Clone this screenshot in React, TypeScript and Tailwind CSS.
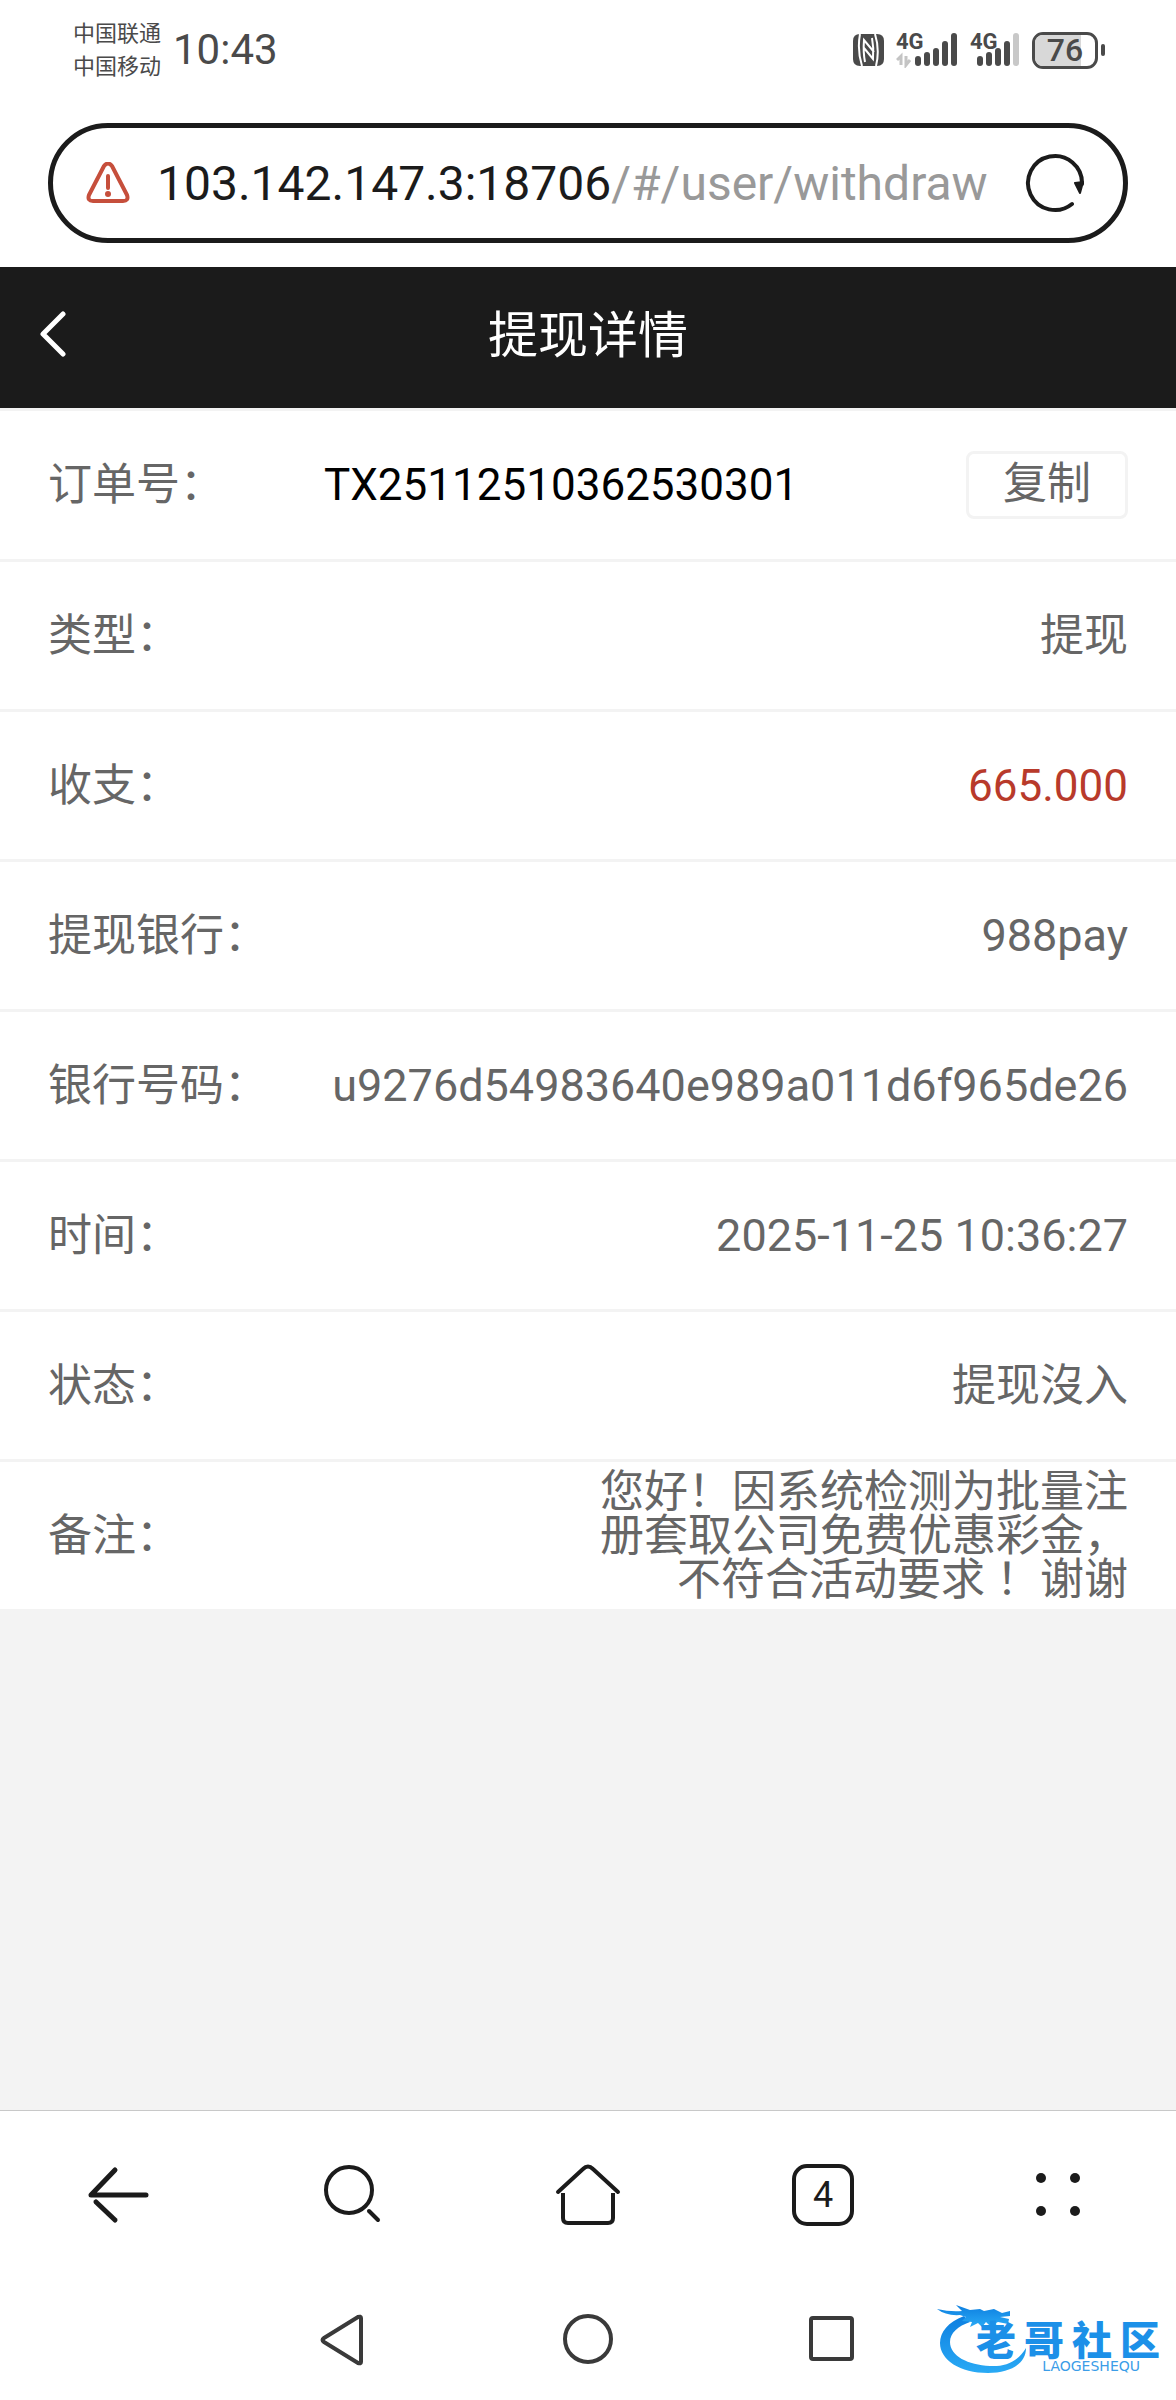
import type { ReactNode } from 'react'

type Detail = {
    label: string
    value: ReactNode
    valueClass?: string
}

const details: Detail[] = [
    { label: '类型：', value: '提现' },
    { label: '收支：', value: '665.000', valueClass: 'text-[#b83a2b]' },
    { label: '提现银行：', value: '988pay', valueClass: 'text-[45px]' },
    { label: '银行号码：', value: 'u9276d54983640e989a011d6f965de26', valueClass: 'text-[45px]' },
    { label: '时间：', value: '2025-11-25 10:36:27', valueClass: 'text-[45px]' },
    { label: '状态：', value: '提现沒入' },
    {
        label: '备注：',
        value: (
            <>
                您好！因系统检测为批量注册套取公司免费优惠彩金，不符合活动要求
                <span lang="zh-TW">！</span> 谢谢
            </>
        ),
        valueClass: 'w-[528px]',
    },
]

function NfcIcon() {
    return (
        <svg width="31" height="32" viewBox="0 0 31 32" aria-label="NFC">
            <path fill="#4a4a4a" d="M7 0H24Q31 0 31 7V25Q31 32 24 32H7Q0 32 0 25V7Q0 0 7 0Z" />
            <path fill="none" stroke="#fff" strokeWidth="2" d="M7 0Q4 16 9 32M22 0Q27 16 23 32" />
            <path fill="none" stroke="#fff" strokeWidth="2" d="M12 28Q10 18 11 6L21 18M11 14L20 25Q21 14 19 4" />
        </svg>
    )
}

function Signal({ roaming }: { roaming?: boolean }) {
    const tops = [24, 20, 16, 9, 1]
    const start = roaming ? 22 : 10
    return (
        <div className="relative">
            <svg width={start + 40} height="36" viewBox={`0 0 ${start + 40} 36`} aria-hidden="true">
                {tops.map((top, i) => (
                    <line
                        key={top}
                        x1={start + i * 9}
                        x2={start + i * 9}
                        y1={top + 3}
                        y2="31"
                        stroke={!roaming && i === 4 ? '#c8c8c8' : '#4a4a4a'}
                        strokeWidth="6"
                        strokeLinecap="round"
                    />
                ))}
                {roaming && (
                    <path d="M1 28L5 24V33M10 24V33L14 28" fill="none" stroke="#c4c4c4" strokeWidth="3" />
                )}
            </svg>
            <span className="absolute top-0 left-0 text-[22px] leading-5 font-bold">4G</span>
        </div>
    )
}

function Battery() {
    return (
        <div className="flex items-center gap-[3px]">
            <div className="relative flex h-[37px] w-[66px] items-center justify-center overflow-hidden rounded-[11px] border-[3px] border-[#4a4a4a]">
                <div className="absolute inset-y-0 left-0 w-[76%] bg-[#d8d8d8]" />
                <span className="relative text-[32px] leading-8 font-medium">76</span>
            </div>
            <div className="h-3 w-1 rounded-full bg-[#4a4a4a]" />
        </div>
    )
}

function StatusBar() {
    return (
        <div className="flex h-[100px] items-center justify-between pr-[71px] pl-[73px] text-[#4a4a4a]">
            <div className="flex items-center gap-3">
                <div className="text-[22px] leading-[33px]">
                    <p>中国联通</p>
                    <p>中国移动</p>
                </div>
                <span className="text-[42px] leading-[44px]">10:43</span>
            </div>
            <div className="flex items-center gap-3">
                <NfcIcon />
                <Signal roaming />
                <Signal />
                <Battery />
            </div>
        </div>
    )
}

function AddressBar() {
    return (
        <div className="px-12 pt-[23px] pb-6">
            <div className="flex h-[120px] items-center rounded-full border-[5px] border-[#1b1b1b] pr-[38px] pl-[33px]">
                <svg width="44" height="42" viewBox="0 0 44 42" fill="none" stroke="#c64f3c" strokeWidth="4" aria-label="不安全">
                    <path d="M18 4Q22 -1 26 4L41 33Q43 39 37 39H7Q1 39 3 33Z" strokeLinejoin="round" />
                    <path d="M22 14V26" strokeLinecap="round" />
                    <circle cx="22" cy="32" r="3" fill="#c64f3c" stroke="none" />
                </svg>
                <button className="flex-1 pt-[2px] pl-[27px] text-left text-[48px] leading-[56px] whitespace-nowrap text-[#1b1b1b]">
                    103.142.147.3:18706<span className="text-[#999]">/#/user/withdraw</span>
                </button>
                <button aria-label="刷新">
                    <svg width="60" height="60" viewBox="0 0 60 60" fill="none">
                        <path d="M57 31A27 27 0 1 0 47 51" stroke="#1b1b1b" strokeWidth="4" strokeLinecap="round" />
                        <path d="M50 30L58 29L55 40Z" fill="#1b1b1b" stroke="#1b1b1b" strokeWidth="2" strokeLinejoin="round" />
                    </svg>
                </button>
            </div>
        </div>
    )
}

function BrowserToolbar() {
    return (
        <nav className="grid h-[170px] grid-cols-5 place-items-center border-t border-[#c8c8c8] pb-[2px]">
            <button aria-label="后退">
                <svg width="62" height="62" viewBox="0 0 62 62" fill="none" stroke="#1b1b1b" strokeWidth="5" strokeLinecap="round">
                    <path d="M59 31H4L28 6" strokeLinejoin="round" />
                    <path d="M9 38L28 56" />
                </svg>
            </button>
            <button aria-label="搜索">
                <svg width="62" height="62" viewBox="0 0 62 62" fill="none" stroke="#1b1b1b" strokeWidth="4" strokeLinecap="round">
                    <circle cx="27" cy="26" r="23" />
                    <path d="M47 47L56 56" />
                </svg>
            </button>
            <button aria-label="主页">
                <svg width="66" height="62" viewBox="0 0 66 62" fill="none" stroke="#1b1b1b" strokeWidth="4">
                    <path d="M3 28L28 5Q33 0 38 5L63 28" strokeLinecap="round" />
                    <path d="M8 29V54Q8 59 13 59H53Q58 59 58 54V29" />
                </svg>
            </button>
            <button
                aria-label="标签页"
                className="flex h-[62px] w-[62px] items-center justify-center rounded-[15px] border-4 border-[#1b1b1b] text-[36px] leading-9 text-[#1b1b1b]"
            >
                4
            </button>
            <button aria-label="菜单">
                <svg width="46" height="46" viewBox="0 0 46 46" fill="#1b1b1b">
                    <circle cx="6" cy="6" r="5" />
                    <circle cx="40" cy="6" r="5" />
                    <circle cx="6" cy="39" r="5" />
                    <circle cx="40" cy="39" r="5" />
                </svg>
            </button>
        </nav>
    )
}

function CommunityLogo() {
    return (
        <div className="absolute right-4 bottom-[26px] h-[70px] w-[224px]">
            <svg className="absolute inset-0" width="224" height="70" viewBox="0 0 224 70" fill="none">
                <defs>
                    <linearGradient id="dragon" x1="0" y1="0" x2="0" y2="1">
                        <stop offset="0" stopColor="#0d7fe0" />
                        <stop offset="1" stopColor="#2aaaf5" />
                    </linearGradient>
                </defs>
                <path
                    fill="url(#dragon)"
                    d="M28 12C12 18 4 28 4 39C4 56 24 69 52 69C74 69 90 60 90 44C82 58 68 63 54 62C32 61 14 52 14 38C14 29 22 22 34 18Z"
                />
                <path
                    fill="url(#dragon)"
                    d="M1 5Q14 8 26 7L20 1L34 6L44 5L48 7L58 5L66 9L74 7V12L64 13L73 15L72 20L62 18L54 22L50 18L46 23L42 19L34 23L36 18L26 17L30 13L24 11Q10 12 1 5Z"
                />
            </svg>
            <div className="absolute top-[20px] right-0 flex w-[184px] justify-between text-[40px] leading-9 font-black text-[#1c90e8]">
                <span>老</span>
                <span>哥</span>
                <span>社</span>
                <span>区</span>
            </div>
            <span className="absolute right-5 bottom-0 font-['DejaVu_Sans',sans-serif] text-[14px] leading-4 text-[#3b9de8]">
                LAOGESHEQU
            </span>
        </div>
    )
}

function SystemNav() {
    return (
        <div className="relative flex h-[120px] items-center justify-center gap-[195px]">
            <button aria-label="返回">
                <svg width="50" height="54" viewBox="0 0 50 54" fill="none" stroke="#3a3a3a" strokeWidth="4" strokeLinejoin="round">
                    <path d="M6 25Q3 27 6 29L40 50Q43 51 43 49V5Q43 3 40 4Z" />
                </svg>
            </button>
            <button aria-label="主屏幕">
                <svg width="50" height="54" viewBox="0 0 50 54" fill="none" stroke="#3a3a3a" strokeWidth="4">
                    <circle cx="25" cy="26" r="23" />
                </svg>
            </button>
            <button aria-label="最近任务">
                <svg width="50" height="54" viewBox="0 0 50 54" fill="none" stroke="#3a3a3a" strokeWidth="4">
                    <rect x="3" y="5" width="41" height="41" rx="2" />
                </svg>
            </button>
            <CommunityLogo />
        </div>
    )
}

export default function App() {
    return (
        <div lang="zh-CN" className="flex min-h-screen flex-col bg-white font-[Roboto,'Noto_Sans_CJK_SC',sans-serif]">
            <StatusBar />
            <AddressBar />

            <header className="grid h-[141px] grid-cols-[80px_1fr_80px] items-center bg-[#1b1b1b] pb-1 text-white">
                <button aria-label="返回" className="pb-1 pl-[39px]">
                    <svg width="28" height="46" viewBox="0 0 28 46" fill="none" stroke="currentColor" strokeWidth="5" strokeLinecap="round" strokeLinejoin="round">
                        <path d="M24 3L4 23L24 43" />
                    </svg>
                </button>
                <h1 className="text-center text-[50px] leading-[60px]">提现详情</h1>
            </header>

            <main className="flex-1 bg-[#f3f3f3]">
                <dl className="border-t-[3px] border-[#f3f3f3] text-[44px] leading-[44px] text-[#666]">
                    <div className="flex min-h-[151px] items-center justify-between border-b-[3px] border-[#f3f3f3] bg-white px-12">
                        <dt>订单号：</dt>
                        <dd className="flex flex-1 items-center justify-between pl-[100px]">
                            <span className="text-black">TX25112510362530301</span>
                            <button className="h-[68px] w-[162px] rounded-lg border-[3px] border-[#f3f3f3] pb-[2px]">复制</button>
                        </dd>
                    </div>
                    {details.map((item) => (
                        <div
                            key={item.label}
                            className="flex min-h-[150px] items-center justify-between border-b-[3px] border-[#f3f3f3] bg-white px-12"
                        >
                            <dt>{item.label}</dt>
                            <dd className={`text-right leading-[44px] ${item.valueClass ?? ''}`}>{item.value}</dd>
                        </div>
                    ))}
                </dl>
            </main>

            <BrowserToolbar />
            <SystemNav />
        </div>
    )
}
